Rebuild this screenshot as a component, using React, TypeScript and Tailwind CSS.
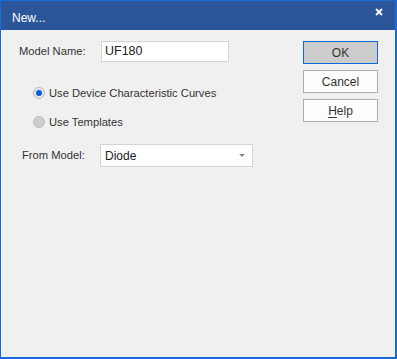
import React from 'react';

const font = { fontFamily: '"Liberation Sans", Arial, sans-serif' };

function Radio({ checked, label }: { checked: boolean; label: string }) {
  return (
    <label className="flex h-[14px] items-center gap-[4px]">
      <span
        className={`flex h-[12px] w-[12px] shrink-0 items-center justify-center rounded-full border ${
          checked ? 'border-[#bcbcbc] bg-[#e6e6e6]' : 'border-[#bdbdbd] bg-[#cdcdcd]'
        }`}
      >
        {checked && <span className="h-[6px] w-[6px] rounded-full bg-[#0a5fd8]" />}
      </span>
      <span className="whitespace-nowrap text-[11.2px] text-[#333]">{label}</span>
    </label>
  );
}

export default function App() {
  return (
    <div
      style={font}
      className="flex h-[359px] w-[397px] flex-col border border-r-2 border-b-2 border-[#1a6ad6] bg-[#f0f0f0]"
    >
      {/* タイトルバー */}
      <div className="relative h-[29px] shrink-0 bg-[#2b579a]">
        <span className="absolute left-[11px] top-[10px] text-[12px] leading-[14px] text-white">New...</span>
        <svg
          className="absolute right-[12px] top-[7px]"
          width="8"
          height="8"
          viewBox="0 0 8 8"
        >
          <path d="M1 1 L7 7 M7 1 L1 7" stroke="white" strokeWidth="1.8" />
        </svg>
      </div>

      <div className="flex flex-1">
        {/* 左側 */}
        <div className="flex flex-1 flex-col pt-[11px]">
          <div className="flex h-[21px] items-center">
            <span className="w-[100px] shrink-0 whitespace-nowrap pl-[18px] text-[11.2px] text-[#333]">Model Name:</span>
            <div className="flex h-[21px] w-[128px] shrink-0 items-center border border-[#d4d4d4] bg-white pl-[3px] text-[12.5px] text-[#222]">
              UF180
            </div>
          </div>

          <div className="ml-[32px] mt-[24px] flex flex-col gap-[15px]">
            <Radio checked label="Use Device Characteristic Curves" />
            <Radio checked={false} label="Use Templates" />
          </div>

          <div className="mt-[15px] flex h-[23px] items-center">
            <span className="w-[99px] shrink-0 whitespace-nowrap pl-[21px] text-[11.2px] text-[#333]">From Model:</span>
            <div className="flex h-[23px] w-[153px] shrink-0 items-center justify-between border border-[#d4d4d4] bg-white pl-[4px] pr-[7px] text-[12px] text-[#222]">
              <span>Diode</span>
              <svg width="6" height="3" viewBox="0 0 6 3">
                <path d="M0 0 L6 0 L3 3 Z" fill="#8a8a8a" />
              </svg>
            </div>
          </div>
        </div>

        {/* ボタン */}
        <div className="flex w-[92px] shrink-0 flex-col gap-[6px] pt-[11px]">
          <button className="h-[23px] w-[75px] border border-[#0a6cd6] bg-[#cccccc] text-[12px] text-[#333]">
            OK
          </button>
          <button className="h-[23px] w-[75px] border border-[#adadad] bg-[#fdfdfd] text-[12px] text-[#333]">
            Cancel
          </button>
          <button className="h-[23px] w-[75px] border border-[#adadad] bg-[#fdfdfd] text-[12px] text-[#333]">
            <span className="underline underline-offset-2">H</span>elp
          </button>
        </div>
      </div>
    </div>
  );
}
